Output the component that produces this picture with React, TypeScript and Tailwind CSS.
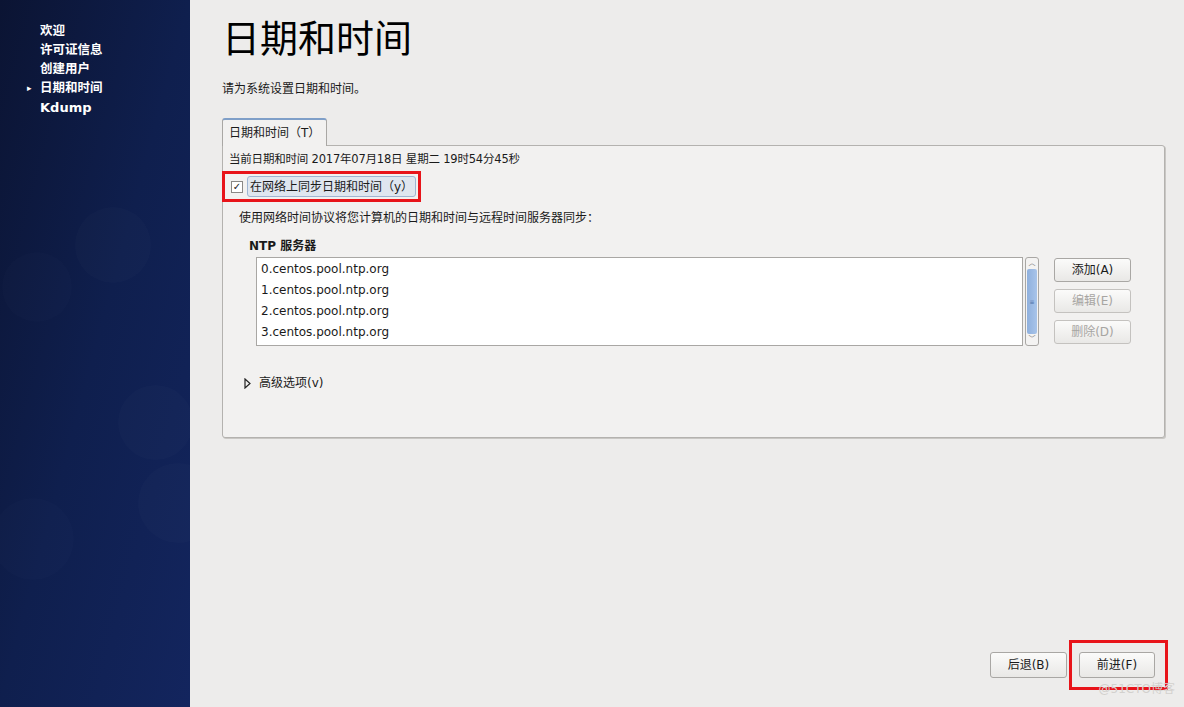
import type { ReactNode } from "react";

const font = { fontFamily: '"DejaVu Sans", "Noto Sans CJK SC", sans-serif' };

const steps = ["欢迎", "许可证信息", "创建用户", "日期和时间", "Kdump"];
const servers = [
  "0.centos.pool.ntp.org",
  "1.centos.pool.ntp.org",
  "2.centos.pool.ntp.org",
  "3.centos.pool.ntp.org",
];

function Btn({
  children,
  disabled,
  className = "",
}: {
  children: ReactNode;
  disabled?: boolean;
  className?: string;
}) {
  return (
    <div
      className={`flex items-center justify-center rounded-[3px] border bg-gradient-to-b from-[#fbfbfa] to-[#e9e8e6] text-[12px] ${
        disabled ? "border-[#c4c2bf] text-[#a7a5a2]" : "border-[#a9a7a4] text-[#1a1a1a]"
      } ${className}`}
    >
      {children}
    </div>
  );
}

function Sidebar() {
  return (
    <aside className="relative h-full w-[190px] shrink-0 overflow-hidden bg-gradient-to-br from-[#0b1433] via-[#0f1f4e] to-[#13255e]">
      <div className="absolute left-[75px] top-[207px] h-[76px] w-[76px] rounded-full bg-white/[0.015]" />
      <div className="absolute left-[2px] top-[252px] h-[70px] w-[70px] rounded-full bg-white/[0.012]" />
      <div className="absolute left-[118px] top-[385px] h-[75px] w-[75px] rounded-full bg-white/[0.015]" />
      <div className="absolute left-[138px] top-[463px] h-[80px] w-[80px] rounded-full bg-white/[0.015]" />
      <div className="absolute left-[-8px] top-[498px] h-[82px] w-[82px] rounded-full bg-white/[0.012]" />
      <nav className="relative flex flex-col pl-[40px] pt-[22px] text-white">
        {steps.map((s, i) => (
          <div key={s} className="relative flex h-[19px] items-center">
            {i === 3 && (
              <span className="absolute left-[-13px] text-[9px]">▸</span>
            )}
            <span
              className={`font-bold ${i === 4 ? "text-[13px]" : "text-[12.5px]"}`}
            >
              {s}
            </span>
          </div>
        ))}
      </nav>
    </aside>
  );
}

export default function App() {
  return (
    <div
      className="flex h-[707px] w-[1184px] overflow-hidden bg-[#edeceb] text-[#1a1a1a]"
      style={font}
    >
      <Sidebar />
      <main className="relative flex flex-1 flex-col pl-[32px] pr-[19px]">
        <h1 className="mt-[17px] h-[44px] text-[38px] leading-[44px] font-normal text-black">
          日期和时间
        </h1>
        <p className="mt-[20px] text-[12px] leading-[16px]">
          请为系统设置日期和时间。
        </p>
        <div className="mt-[21px] flex">
          <div className="relative z-10 -mb-px flex h-[28px] w-[105px] items-center rounded-t-[3px] border border-b-0 border-t-2 border-[#a9a7a4] border-t-[#7f9fc8] bg-[#f2f1f0] pl-[6px] text-[12px]">
            日期和时间（T）
          </div>
        </div>
        <section className="flex h-[293px] flex-col rounded-b-[3px] rounded-tr-[3px] border border-[#b4b2af] bg-[#f2f1f0] pl-[6px] pr-[33px] shadow-[1px_1px_0_#c9c7c4]">
          <p className="mt-[6px] text-[11.5px] leading-[14px] tracking-[-0.2px]">
            当前日期和时间 2017年07月18日 星期二 19时54分45秒
          </p>
          <div className="-ml-[7px] mt-[5px] flex h-[31px] w-[199px] items-center border-[3px] border-[#e8141a] pl-[6px]">
            <div className="flex h-[12px] w-[12px] items-center justify-center border border-[#8a8885] bg-white text-[10px] leading-none">
              ✓
            </div>
            <div className="ml-[4px] flex h-[21px] items-center rounded-[3px] border border-[#9fb5d2] bg-[#dfe6ef] px-[2px] text-[12px]">
              在网络上同步日期和时间（y）
            </div>
          </div>
          <p className="ml-[10px] mt-[8px] text-[12px] leading-[16px]">
            使用网络时间协议将您计算机的日期和时间与远程时间服务器同步：
          </p>
          <p className="ml-[20px] mt-[12px] text-[12px] font-bold leading-[16px]">
            NTP 服务器
          </p>
          <div className="ml-[27px] mt-[3px] flex gap-[15px]">
            <div className="flex flex-1 gap-[2px]">
              <div className="flex h-[89px] flex-1 flex-col border border-[#a9a7a4] bg-white pl-[4px] pt-[1px]">
                {servers.map((s) => (
                  <div key={s} className="h-[21px] text-[12px] leading-[21px]">
                    {s}
                  </div>
                ))}
              </div>
              <div className="flex h-[89px] w-[14px] flex-col rounded-[3px] border border-[#a9a7a4] bg-[#f4f3f2]">
                <div className="flex h-[11px] items-center justify-center text-[7px] text-[#777]">
                  ︿
                </div>
                <div className="mx-[1px] flex flex-1 items-center justify-center rounded-[2px] bg-gradient-to-r from-[#8fb0dd] to-[#a8c4ea] text-[6px] leading-[2px] text-[#4b6fa6]">
                  ≡
                </div>
                <div className="flex h-[11px] items-center justify-center text-[7px] text-[#777]">
                  ﹀
                </div>
              </div>
            </div>
            <div className="flex w-[77px] flex-col gap-[7px] pt-[1px]">
              <Btn className="h-[24px]">添加(A)</Btn>
              <Btn className="h-[24px]" disabled>
                编辑(E)
              </Btn>
              <Btn className="h-[24px]" disabled>
                删除(D)
              </Btn>
            </div>
          </div>
          <div className="ml-[15px] mt-[28px] flex items-center gap-[8px] text-[12px]">
            <svg width="7" height="11" viewBox="0 0 7 11">
              <path d="M1 1 L6 5.5 L1 10 Z" fill="none" stroke="#222" strokeWidth="1.2" />
            </svg>
            <span>高级选项(v)</span>
          </div>
        </section>
        <div className="flex-1" />
        <div className="mb-[29px] flex items-center justify-end gap-[12px] pr-[10px]">
          <Btn className="h-[26px] w-[77px]">后退(B)</Btn>
          <div className="-my-[12px] -ml-[10px] -mr-[13px] border-[3px] border-[#e8141a] py-[9px] pl-[7px] pr-[10px]">
            <Btn className="h-[26px] w-[76px]">前进(F)</Btn>
          </div>
        </div>
        <span className="absolute bottom-[11px] right-[9px] text-[12px] leading-[14px] text-[#d3d1ce]">
          @51CTO博客
        </span>
      </main>
    </div>
  );
}
